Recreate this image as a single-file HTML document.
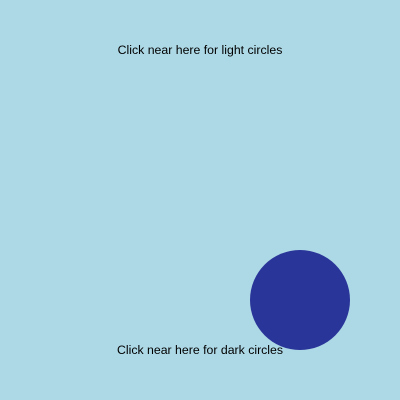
<!DOCTYPE html>
<html><head><style>
html,body{margin:0;padding:0;}
body{width:400px;height:400px;background:#ADD8E6;position:relative;overflow:hidden;font-family:"Liberation Sans",Arial,sans-serif;font-size:12.3px;color:#000;}
.t{position:absolute;left:0;width:400px;text-align:center;line-height:14px;}
.c{position:absolute;left:250px;top:250px;width:100px;height:100px;border-radius:50%;background:#2A3599;}
</style></head><body>
<div class="t" style="top:43px">Click near here for light circles</div>
<div class="c"></div>
<div class="t" style="top:343px">Click near here for dark circles</div>
</body></html>
